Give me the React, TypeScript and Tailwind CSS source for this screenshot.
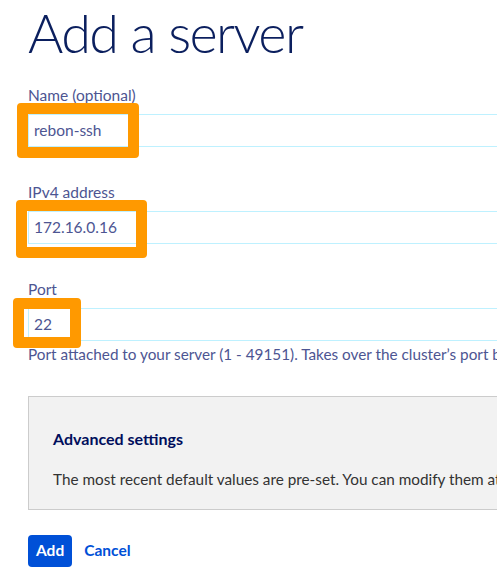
import React from 'react';

const font = { fontFamily: 'Lato, "Open Sans", sans-serif' };

function Field({
  label,
  value,
  box,
  hint,
}: {
  label: string;
  value: string;
  box: string;
  hint?: string;
}) {
  return (
    <div className="flex flex-col">
      <label className="text-[15.5px] leading-5 text-[#4d5592]">{label}</label>
      <div className="relative mt-[9px]">
        <div className="h-[33px] w-[720px] border border-[#bef1ff] bg-white pl-[5px] flex items-center text-[15.5px] text-[#4d5592]">
          {value}
        </div>
        <div className={`absolute border-[11px] border-[#ff9900] rounded-[4px] ${box}`} />
      </div>
      {hint && (
        <p className="relative mt-[3px] text-[15.3px] leading-5 text-[#4d5592] whitespace-nowrap">{hint}</p>
      )}
    </div>
  );
}

export default function App() {
  return (
    <div className="w-[497px] h-[576px] overflow-hidden bg-white" style={font}>
      <div className="pl-[28px] w-[760px]">
        <h1 className="text-[54px] font-light leading-[64px] tracking-[-1.6px] text-[#0b1f5e] pt-[1px]">
          Add a server
        </h1>

        <div className="mt-[20px] flex flex-col gap-[35px]">
          <Field
            label="Name (optional)"
            value="rebon-ssh"
            box="-left-[11px] -top-[11px] w-[122px] h-[55px]"
          />
          <Field
            label="IPv4 address"
            value="172.16.0.16"
            box="-left-[12px] -top-[11px] w-[131px] h-[58px]"
          />
          <Field
            label="Port"
            value="22"
            box="-left-[15px] -top-[10px] w-[68px] h-[50px]"
            hint="Port attached to your server (1 - 49151). Takes over the cluster’s port by default."
          />
        </div>

        <div className="mt-[32px] h-[114px] w-[720px] border border-[#cccccc] bg-[#f2f2f2] px-[24px] pt-[32px]">
          <h2 className="text-[16px] font-bold leading-5 text-[#000e5c]">Advanced settings</h2>
          <p className="mt-[20px] text-[15.3px] leading-5 text-[#333333] whitespace-nowrap">
            The most recent default values are pre-set. You can modify them at any time.
          </p>
        </div>

        <div className="mt-[25px] flex items-center gap-[12px]">
          <button className="h-[32px] px-[8px] rounded-[4px] bg-[#0050d7] text-white text-[15.5px] font-bold">
            Add
          </button>
          <button className="text-[15.5px] font-bold text-[#0050d7]">Cancel</button>
        </div>
      </div>
    </div>
  );
}
